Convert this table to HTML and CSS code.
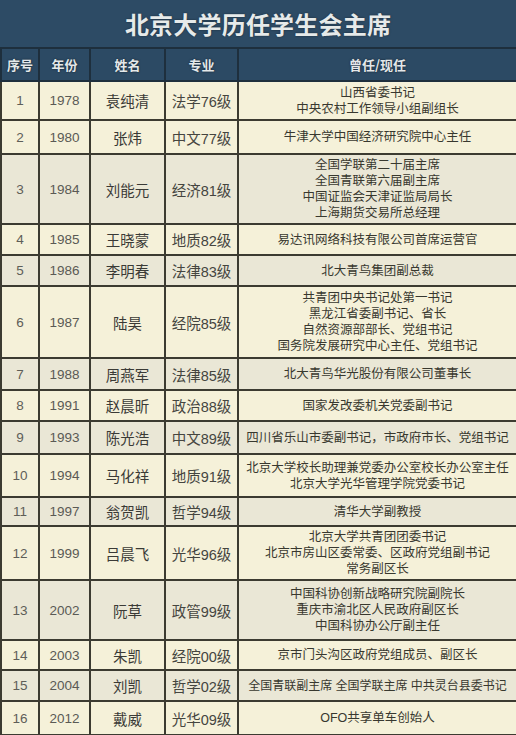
FILE: index.html
```html
<!DOCTYPE html>
<html lang="zh-CN">
<head>
<meta charset="utf-8">
<title>北京大学历任学生会主席</title>
<link rel="stylesheet" href="styles.css">
</head>
<body>
<div class="sheet">
  <div class="title">北京大学历任学生会主席</div>
  <table class="grid">
    <colgroup>
      <col class="c-no"><col class="c-year"><col class="c-name"><col class="c-major"><col class="c-role">
    </colgroup>
    <thead>
      <tr class="head"><th>序号</th><th>年份</th><th>姓名</th><th>专业</th><th>曾任/现任</th></tr>
    </thead>
    <tbody>
      <tr class="h39"><td class="no">1</td><td class="yr">1978</td><td class="nm">袁纯清</td><td class="mj">法学76级</td><td class="rl">山西省委书记<br>中央农村工作领导小组副组长</td></tr>
      <tr class="h34"><td class="no">2</td><td class="yr">1980</td><td class="nm">张炜</td><td class="mj">中文77级</td><td class="rl">牛津大学中国经济研究院中心主任</td></tr>
      <tr class="h69 alt"><td class="no">3</td><td class="yr">1984</td><td class="nm">刘能元</td><td class="mj">经济81级</td><td class="rl">全国学联第二十届主席<br>全国青联第六届副主席<br>中国证监会天津证监局局长<br>上海期货交易所总经理</td></tr>
      <tr class="h31"><td class="no">4</td><td class="yr">1985</td><td class="nm">王晓蒙</td><td class="mj">地质82级</td><td class="rl">易达讯网络科技有限公司首席运营官</td></tr>
      <tr class="h31 alt"><td class="no">5</td><td class="yr">1986</td><td class="nm">李明春</td><td class="mj">法律83级</td><td class="rl">北大青鸟集团副总裁</td></tr>
      <tr class="h72"><td class="no">6</td><td class="yr">1987</td><td class="nm">陆昊</td><td class="mj">经院85级</td><td class="rl">共青团中央书记处第一书记<br>黑龙江省委副书记、省长<br>自然资源部部长、党组书记<br>国务院发展研究中心主任、党组书记</td></tr>
      <tr class="h32 alt"><td class="no">7</td><td class="yr">1988</td><td class="nm">周燕军</td><td class="mj">法律85级</td><td class="rl">北大青鸟华光股份有限公司董事长</td></tr>
      <tr class="h31"><td class="no">8</td><td class="yr">1991</td><td class="nm">赵晨昕</td><td class="mj">政治88级</td><td class="rl">国家发改委机关党委副书记</td></tr>
      <tr class="h33 alt"><td class="no">9</td><td class="yr">1993</td><td class="nm">陈光浩</td><td class="mj">中文89级</td><td class="rl">四川省乐山市委副书记，市政府市长、党组书记</td></tr>
      <tr class="h43"><td class="no">10</td><td class="yr">1994</td><td class="nm">马化祥</td><td class="mj">地质91级</td><td class="rl">北京大学校长助理兼党委办公室校长办公室主任<br>北京大学光华管理学院党委书记</td></tr>
      <tr class="h29 alt"><td class="no">11</td><td class="yr">1997</td><td class="nm">翁贺凯</td><td class="mj">哲学94级</td><td class="rl">清华大学副教授</td></tr>
      <tr class="h54"><td class="no">12</td><td class="yr">1999</td><td class="nm">吕晨飞</td><td class="mj">光华96级</td><td class="rl">北京大学共青团团委书记<br>北京市房山区委常委、区政府党组副书记<br>常务副区长</td></tr>
      <tr class="h60 alt"><td class="no">13</td><td class="yr">2002</td><td class="nm">阮草</td><td class="mj">政管99级</td><td class="rl">中国科协创新战略研究院副院长<br>重庆市渝北区人民政府副区长<br>中国科协办公厅副主任</td></tr>
      <tr class="h30"><td class="no">14</td><td class="yr">2003</td><td class="nm">朱凯</td><td class="mj">经院00级</td><td class="rl">京市门头沟区政府党组成员、副区长</td></tr>
      <tr class="h31 alt"><td class="no">15</td><td class="yr">2004</td><td class="nm">刘凯</td><td class="mj">哲学02级</td><td class="rl small">全国青联副主席 全国学联主席 中共灵台县委书记</td></tr>
      <tr class="h34"><td class="no">16</td><td class="yr">2012</td><td class="nm">戴威</td><td class="mj">光华09级</td><td class="rl">OFO共享单车创始人</td></tr>
    </tbody>
  </table>
</div>
</body>
</html>
```
FILE: styles.css
```css
html, body {
  margin: 0;
  padding: 0;
  background: #f4f0d8;
}
body {
  font-family: "Liberation Sans", "Noto Sans CJK SC", sans-serif;
  width: 516px;
  overflow: hidden;
}
.sheet {
  width: 516px;
}
.title {
  height: 47px;
  background: #2d4b65;
  color: #e6eaea;
  font-family: "Noto Sans CJK SC", sans-serif;
  font-weight: 700;
  font-size: 24px;
  line-height: 47px;
  text-align: center;
  text-shadow: 0 0 2px rgba(0, 0, 0, 0.5);
  letter-spacing: 0.2px;
}
.grid {
  width: 516px;
  border-collapse: collapse;
  table-layout: fixed;
  background: #f5f1d9;
}
.c-no { width: 38px; }
.c-year { width: 51px; }
.c-name { width: 75px; }
.c-major { width: 73px; }
.c-role { width: 279px; }

.grid th, .grid td {
  border: 2px solid #3c3b31;
  padding: 2px 1px;
  text-align: center;
  vertical-align: middle;
  box-sizing: border-box;
}
.head {
  height: 33px;
  background: #2c4a64;
}
.grid th {
  border-color: #1e2f3d;
  color: #e4e8ea;
  font-family: "Noto Sans CJK SC", sans-serif;
  font-weight: 700;
  font-size: 13px;
  text-shadow: 0 0 2px rgba(0, 0, 0, 0.6);
}
.alt {
  background: #eae7d6;
}
.no {
  color: #5e5e58;
  font-size: 13.5px;
}
.yr {
  color: #5a5a55;
  font-size: 13.5px;
}
.nm {
  color: #3a3a36;
  font-size: 14.5px;
}
.mj {
  color: #45453f;
  font-size: 14.5px;
}
.rl {
  color: #38382f;
  font-size: 12.5px;
  line-height: 16px;
}
.rl.small {
  font-size: 12px;
  white-space: nowrap;
}
.h29 { height: 29px; }
.h30 { height: 30px; }
.h31 { height: 31px; }
.h32 { height: 32px; }
.h33 { height: 33px; }
.h34 { height: 34px; }
.h39 { height: 39px; }
.h43 { height: 43px; }
.h54 { height: 54px; }
.h60 { height: 60px; }
.h69 { height: 69px; }
.h72 { height: 72px; }
```
